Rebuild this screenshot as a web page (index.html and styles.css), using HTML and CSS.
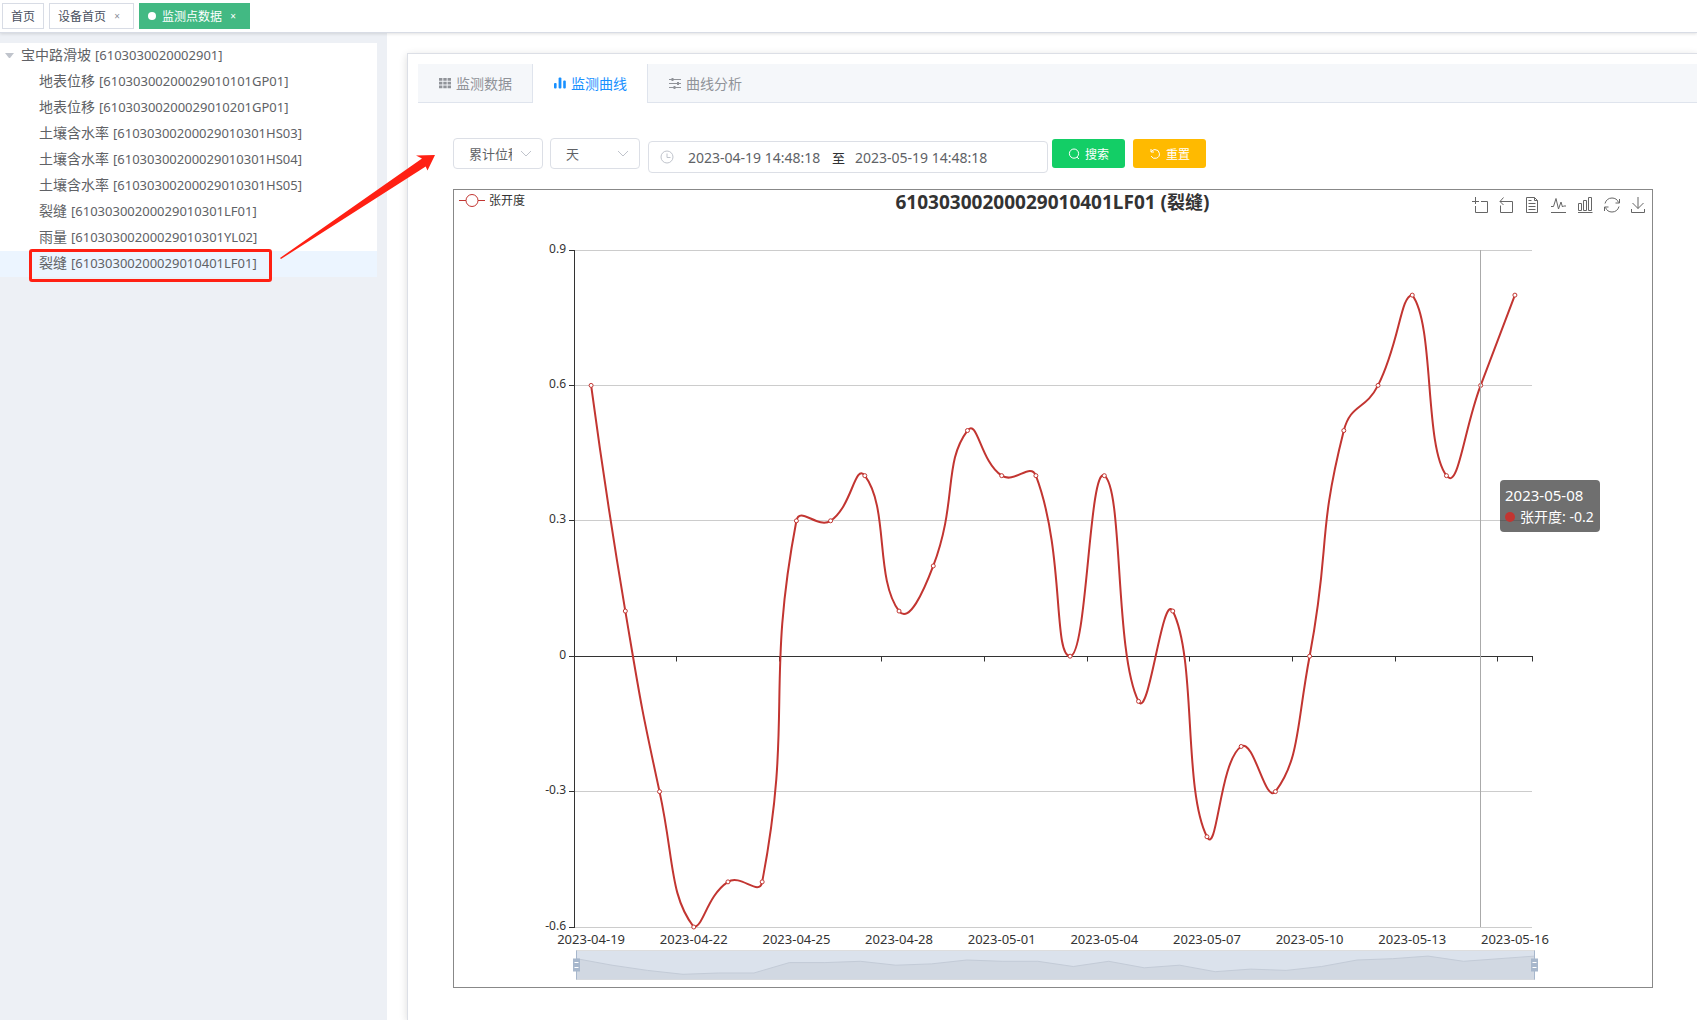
FILE: index.html
```html
<!DOCTYPE html>
<html lang="zh-CN">
<head>
<meta charset="utf-8">
<meta name="viewport" content="width=device-width, initial-scale=1">
<title>监测点数据</title>
<link rel="stylesheet" href="styles.css">
</head>
<body>
<div class="app">
  <nav class="tags" aria-label="已打开页面">
    <a class="tag" href="#home">首页</a>
    <a class="tag" href="#device">设备首页<span class="tag-close">×</span></a>
    <a class="tag tag-active" href="#point">监测点数据<span class="tag-close">×</span></a>
  </nav>

  <div class="body">
    <aside class="side">
      <ul class="tree">
        <li class="node root"><span class="caret"></span>宝中路滑坡 <span class="code">[6103030020002901]</span></li>
        <li class="node">地表位移 <span class="code">[61030300200029010101GP01]</span></li>
        <li class="node">地表位移 <span class="code">[61030300200029010201GP01]</span></li>
        <li class="node">土壤含水率 <span class="code">[61030300200029010301HS03]</span></li>
        <li class="node">土壤含水率 <span class="code">[61030300200029010301HS04]</span></li>
        <li class="node">土壤含水率 <span class="code">[61030300200029010301HS05]</span></li>
        <li class="node">裂缝 <span class="code">[61030300200029010301LF01]</span></li>
        <li class="node">雨量 <span class="code">[61030300200029010301YL02]</span></li>
        <li class="node current">裂缝 <span class="code">[61030300200029010401LF01]</span></li>
      </ul>
    </aside>

    <main class="main">
      <section class="card">
        <div class="tabs" role="tablist">
          <button class="tab" role="tab" type="button">
            <svg class="tab-icon" viewBox="0 0 14 14" fill="currentColor"><path d="M1 2h3.4v2.8H1zM5.3 2h3.4v2.8H5.3zM9.6 2H13v2.8H9.6zM1 5.7h3.4v2.8H1zM5.3 5.7h3.4v2.8H5.3zM9.6 5.7H13v2.8H9.6zM1 9.4h3.4v2.8H1zM5.3 9.4h3.4v2.8H5.3zM9.6 9.4H13v2.8H9.6z"/></svg>监测数据</button>
          <button class="tab tab-on" role="tab" type="button" aria-selected="true">
            <svg class="tab-icon" viewBox="0 0 14 14" fill="currentColor"><rect x="1" y="7" width="2.6" height="5.5" rx="1"/><rect x="5.6" y="1.5" width="2.8" height="11" rx="1"/><rect x="10.2" y="4.5" width="2.6" height="8" rx="1"/></svg>监测曲线</button>
          <button class="tab" role="tab" type="button">
            <svg class="tab-icon" viewBox="0 0 14 14" fill="none" stroke="currentColor"><path d="M1 3.5h12M1 7.5h12M1 11.5h12"/><path d="M4.5 2v3M10 6v3M6.5 10v3" stroke-width="2"/></svg>曲线分析</button>
        </div>

        <div class="pane">
          <form class="filters">
            <div class="select">
              <select aria-label="数据类型"><option>累计位移</option></select>
              <svg class="chevron" viewBox="0 0 12 7"><path d="M1 1l5 5 5-5"/></svg>
            </div>
            <div class="select">
              <select aria-label="时间粒度"><option>天</option></select>
              <svg class="chevron" viewBox="0 0 12 7"><path d="M1 1l5 5 5-5"/></svg>
            </div>
            <div class="range">
              <svg class="clock" viewBox="0 0 14 14"><circle cx="7" cy="7" r="6"/><path d="M7 3.5V7.5h3.5"/></svg>
              <input type="text" aria-label="开始时间" value="2023-04-19 14:48:18">
              <span class="range-sep">至</span>
              <input type="text" aria-label="结束时间" value="2023-05-19 14:48:18">
            </div>
            <div class="actions">
              <button class="btn btn-search" type="button"><svg class="btn-icon" viewBox="0 0 12 12"><circle cx="6" cy="5.6" r="4.6"/><path d="M9 9.2l2 1.8"/></svg>搜索</button>
              <button class="btn btn-reset" type="button"><svg class="btn-icon" viewBox="0 0 12 12"><path d="M2 1v3h3M2.2 3.8C3.200 2.400 4.500 1.600 6 1.600a4.400 4.400 0 1 1-3.900 6.400"/></svg>重置</button>
            </div>
          </form>

          <div class="chart">
            <svg class="plot" id="plot" role="img" aria-label="张开度曲线"></svg>
            <header class="chart-head">
              <div class="legend"><svg class="legend-mark" viewBox="0 0 26 14"><path d="M0 7.500H7M19 7.500H26"/><circle cx="13" cy="7.500" r="6"/></svg>张开度</div>
              <h1 class="chart-title">61030300200029010401LF01 (<span class="cjk">裂缝</span>)</h1>
              <div class="toolbox">
                <button type="button" aria-label="区域缩放"><svg viewBox="0 0 16 16"><path d="M0 4.500H7M3.500 0V7M9 4.500h6.500v11h-12V9"/></svg></button>
                <button type="button" aria-label="缩放还原"><svg viewBox="0 0 16 16"><path d="M5.500 0.500L2 4.500l3.500 3.500M2 4.500h12.500v11h-12V8.500"/></svg></button>
                <button type="button" aria-label="数据视图"><svg viewBox="0 0 16 16"><path d="M9.500 0.500H1.500v15h11V3.500zM9.500 0.500v3h3M3.500 6.500h7M3.500 9.500h7M3.500 12.500h7M3.500 3.500h3"/></svg></button>
                <button type="button" aria-label="折线图"><svg viewBox="0 0 16 16"><path d="M0 9.500H2.500L5 1.500 7.500 12l2.500-7 1.500 5 1-1h2.500M0 15.500h15"/></svg></button>
                <button type="button" aria-label="柱状图"><svg viewBox="0 0 16 16"><path d="M1.500 6.500h3v7h-3zM6.500 3.500h3v10h-3zM11.500 0.500h3v13h-3zM1 15.500h14.500"/></svg></button>
                <button type="button" aria-label="还原"><svg viewBox="0 0 16 16"><path d="M1 6.500C2 3 4.500 1 8 1c3 0 5.500 1.500 6.500 4.500M15.500 2v4h-4M15 9.500c-1 3.500-3.500 5.500-7 5.500-3 0-5.500-1.500-6.500-4.500M0.500 14v-4h4"/></svg></button>
                <button type="button" aria-label="保存为图片"><svg viewBox="0 0 16 16"><path d="M8 0v11.500M2.500 6L8 11.500 13.500 6M1.500 12v3.500h13V12"/></svg></button>
              </div>
            </header>
            <div class="tooltip">
              <div class="tip-date">2023-05-08</div>
              <div class="tip-row"><span class="tip-dot"></span>张开度: -0.2</div>
            </div>
          </div>
        </div>
      </section>
    </main>
  </div>

  <div class="mark-box"></div>
  <svg class="mark-arrow" viewBox="0 0 160 108"><path d="M0 106L142 6.500 136 3.500 155 3 147.500 18.500 145.700 14.500 1 107z"/></svg>
</div>
<script src="chart.js"></script>
</body>
</html>
```

FILE: styles.css
```css
* { box-sizing: border-box; }

body {
  margin: 0;
  background: #fff;
  color: #606266;
  font-family: "Noto Sans", "Noto Sans CJK SC", sans-serif;
  font-size: 14px;
}

button, input, select { font: inherit; }

.app {
  position: relative;
  display: flex;
  flex-direction: column;
  min-height: 100vh;
}

/* opened pages */
.tags {
  position: relative;
  display: flex;
  gap: 5px;
  height: 33px;
  padding: 3px 2px;
  border-bottom: 1px solid #d8dce5;
  box-shadow: 0 1px 3px rgba(0, 0, 0, 0.12);
}
.tag {
  display: flex;
  align-items: center;
  height: 26px;
  padding: 0 8px;
  border: 1px solid #d8dce5;
  color: #495060;
  font-size: 12px;
  text-decoration: none;
}
.tag-close {
  width: 16px;
  margin-left: 3px;
  color: #8c919b;
  font-size: 10px;
  text-align: center;
}
.tag-active {
  border-color: #42b983;
  background: #42b983;
  color: #fff;
}
.tag-active .tag-close { color: #fff; }
.tag-active::before {
  content: "";
  width: 8px;
  height: 8px;
  margin-right: 6px;
  border-radius: 50%;
  background: #fff;
}

.body { display: flex; flex: 1; }

/* device tree */
.side {
  flex: 0 0 387px;
  padding: 10px 10px 0 0;
  background: #edf0f5;
}
.tree {
  margin: 0;
  padding: 0;
  background: #fff;
  list-style: none;
}
.node {
  display: flex;
  align-items: center;
  gap: 4px;
  height: 26px;
  padding: 0 0 2px 39px;
  line-height: 24px;
  white-space: nowrap;
}
.root { padding-left: 5px; }
.caret {
  width: 9px;
  margin-right: 3px;
  border: solid transparent;
  border-width: 5px 4px 0;
  border-top-color: #c0c4cc;
}
.code { font-size: 13px; }
.current { background: #ecf5ff; }

/* content */
.main {
  display: flex;
  flex: 1;
  min-width: 0;
  padding: 20px 0 0 20px;
}
.card {
  flex: 1;
  min-width: 0;
  padding: 10px 0 0 10px;
  border: solid #dcdfe6;
  border-width: 1px 0 0 1px;
  box-shadow: 0 2px 8px rgba(0, 0, 0, 0.14);
}
.tabs {
  display: flex;
  height: 39px;
  background: #f5f7fa;
  border-bottom: 1px solid #dfe4ed;
}
.tab {
  display: flex;
  align-items: center;
  gap: 4px;
  height: 39px;
  padding: 0 20px 2px;
  border: 0;
  background: transparent;
  color: #909399;
}
.tab-on {
  border: solid #dfe4ed;
  border-width: 0 1px;
  background: #fff;
  color: #1890ff;
}
.tab-icon { width: 14px; height: 14px; }

.pane { padding: 31px 44px 0 35px; }

.filters {
  display: flex;
  align-items: center;
  gap: 7px;
  margin-bottom: 16px;
}
.select { position: relative; }
.select select {
  display: block;
  width: 90px;
  height: 31px;
  padding: 0 30px 0 15px;
  border: 1px solid #dcdfe6;
  border-radius: 4px;
  background: #fff;
  color: #606266;
  font-size: 13px;
  appearance: none;
}
.chevron {
  position: absolute;
  top: 12px;
  right: 11px;
  width: 12px;
  height: 7px;
  fill: none;
  stroke: #c0c4cc;
  pointer-events: none;
}
.range {
  display: flex;
  align-items: center;
  width: 400px;
  height: 32px;
  margin: 7px 0 0 1px;
  padding: 0 11px;
  border: 1px solid #dcdfe6;
  border-radius: 4px;
}
.clock {
  width: 14px;
  height: 14px;
  margin-right: 14px;
  fill: none;
  stroke: #c0c4cc;
}
.range input {
  width: 134px;
  padding: 0;
  border: 0;
  outline: 0;
  background: transparent;
  color: #606266;
  font-size: 14px;
}
.range-sep {
  margin: 0 10px;
  color: #303133;
  font-size: 13px;
}
.actions {
  display: flex;
  gap: 8px;
  margin-left: -3px;
}
.btn {
  display: flex;
  align-items: center;
  justify-content: center;
  gap: 5px;
  width: 73px;
  height: 29px;
  padding: 0;
  border: 0;
  border-radius: 3px;
  color: #fff;
  font-size: 12px;
}
.btn-search { background: #13ce66; }
.btn-reset { background: #ffba00; }
.btn-icon {
  width: 12px;
  height: 12px;
  fill: none;
  stroke: #fff;
}

/* chart: the heading row and the plot share one grid cell */
.chart {
  position: relative;
  display: grid;
  border: 1px solid #888;
}
.plot, .chart-head { grid-area: 1 / 1; }
.plot {
  display: block;
  width: 100%;
  height: 797px;
}
.chart-head {
  z-index: 1;
  display: grid;
  grid-template-columns: 1fr auto 1fr;
  align-items: start;
  align-self: start;
  padding: 0 6px 0 5px;
}
.legend {
  display: flex;
  align-items: center;
  gap: 4px;
  height: 20px;
  color: #333;
  font-size: 12px;
}
.legend-mark {
  width: 26px;
  height: 14px;
  fill: none;
  stroke: #c23531;
}
.chart-title {
  margin: 0;
  color: #333;
  font-size: 19px;
  font-weight: 700;
  line-height: 24px;
}
.cjk { font-size: 18px; }
.toolbox {
  display: flex;
  justify-content: space-between;
  justify-self: end;
  width: 174px;
  padding-top: 7px;
}
.toolbox button {
  width: 16px;
  height: 16px;
  padding: 0;
  border: 0;
  background: none;
}
.toolbox svg {
  display: block;
  fill: none;
  stroke: #666;
}

.tooltip {
  position: absolute;
  top: 290px;
  right: 52px;
  z-index: 2;
  width: 100px;
  padding: 5px;
  border-radius: 4px;
  background: rgba(50, 50, 50, 0.7);
  color: #fff;
  line-height: 21px;
  white-space: nowrap;
}
.tip-date { font-size: 15px; }
.tip-row { display: flex; align-items: center; }
.tip-dot {
  width: 10px;
  height: 10px;
  margin-right: 5px;
  border-radius: 50%;
  background: #c23531;
}

/* plot parts */
.grid-line { stroke: #ccc; }
.axis { fill: none; stroke: #333; }
.pointer { stroke: #aaa; }
.series { fill: none; stroke: #c23531; stroke-width: 2; }
.dot { fill: #fff; stroke: #c23531; }
.label-x { fill: #333; font-size: 13px; text-anchor: middle; }
.label-y { fill: #333; font-size: 12px; text-anchor: end; }
.zoom-bg { fill: #dbe2ec; stroke: #ddd; }
.zoom-area { fill: #d1d8e2; }
.zoom-line { fill: none; stroke: #c3cbd7; }
.handle { fill: #a7b7cc; }
.handle-grip { stroke: #fff; }

/* callout over the page */
.mark-box {
  position: absolute;
  top: 249px;
  left: 29px;
  width: 243px;
  height: 33px;
  border: 3px solid #ff2013;
  border-radius: 3px;
}
.mark-arrow {
  position: absolute;
  top: 152px;
  left: 280px;
  width: 160px;
  height: 108px;
  fill: #ff2013;
}
```

FILE: chart.js
```js
(function () {
  var plot = document.getElementById('plot');
  var values = [0.6, 0.1, -0.3, -0.6, -0.5, -0.5, 0.3, 0.3, 0.4, 0.1, 0.2, 0.5, 0.4, 0.4,
    0, 0.4, -0.1, 0.1, -0.4, -0.2, -0.3, 0, 0.5, 0.6, 0.8, 0.4, 0.6, 0.8];
  var start = Date.UTC(2023, 3, 19);

  function add(name, cls, attrs, text) {
    var el = document.createElementNS('http://www.w3.org/2000/svg', name);
    el.setAttribute('class', cls);
    Object.keys(attrs).forEach(function (k) { el.setAttribute(k, attrs[k]); });
    if (text !== undefined) el.textContent = text;
    plot.appendChild(el);
  }
  function half(n) { return Math.floor(n) + 0.5; }

  // Smooth curve through the points, handles kept inside their bounding box
  function smooth(pts) {
    var xs = pts.map(function (p) { return p[0]; });
    var ys = pts.map(function (p) { return p[1]; });
    var lo = [Math.min.apply(0, xs), Math.min.apply(0, ys)];
    var hi = [Math.max.apply(0, xs), Math.max.apply(0, ys)];
    function clamp(p) {
      return p.map(function (v, i) { return Math.min(hi[i], Math.max(lo[i], v)); });
    }
    var d = 'M' + pts[0];
    var out = pts[0];
    for (var i = 1; i < pts.length; i++) {
      var p = pts[i], a = pts[i - 1], b = pts[i + 1] || p;
      var la = Math.hypot(p[0] - a[0], p[1] - a[1]);
      var lb = Math.hypot(p[0] - b[0], p[1] - b[1]);
      var r = lb / (la + lb);
      var v = [b[0] - a[0], b[1] - a[1]];
      var cin = clamp([p[0] - v[0] * 0.5 * (1 - r), p[1] - v[1] * 0.5 * (1 - r)]);
      if (!pts[i + 1]) cin = p;
      d += 'C' + out + ' ' + cin + ' ' + p;
      out = clamp([p[0] + v[0] * 0.5 * r, p[1] + v[1] * 0.5 * r]);
    }
    return d;
  }

  function draw() {
    plot.textContent = '';
    var w = plot.clientWidth, h = plot.clientHeight;
    var x0 = Math.round(w * 0.1), x1 = Math.round(w * 0.9), top = 60, bottom = h - 60;
    var band = (x1 - x0) / values.length;
    function y(v) { return top + (0.9 - v) / 1.5 * (bottom - top); }

    [0.9, 0.6, 0.3, 0, -0.3, -0.6].forEach(function (v) {
      var gy = half(y(v));
      if (v !== 0) add('path', 'grid-line', { d: 'M' + x0 + ' ' + gy + 'H' + x1 });
      add('path', 'axis', { d: 'M' + (x0 - 5) + ' ' + gy + 'H' + x0 });
      add('text', 'label-y', { x: x0 - 8, y: gy + 2 }, String(v));
    });
    add('path', 'axis', { d: 'M' + half(x0) + ' ' + top + 'V' + (bottom + 1) });
    var zero = half(y(0)), d = 'M' + x0 + ' ' + zero + 'H' + (x1 + 1);
    for (var i = 0; i <= values.length; i++) {
      if (i % 3 === 0 || i === values.length) d += 'M' + half(x0 + i * band) + ' ' + zero + 'v5';
    }
    add('path', 'axis', { d: d });

    var pts = values.map(function (v, i) { return [x0 + (i + 0.5) * band, y(v)]; });
    add('path', 'series', { d: smooth(pts) });
    pts.forEach(function (p, i) {
      add('circle', 'dot', { cx: p[0], cy: p[1], r: 2 });
      if (i % 3 === 0) {
        var day = new Date(start + i * 864e5).toISOString().slice(0, 10);
        add('text', 'label-x', { x: p[0], y: bottom + 17 }, day);
      }
    });
    add('path', 'pointer', { d: 'M' + half(pts[26][0]) + ' ' + top + 'V' + bottom });

    // Range slider with a small copy of the series
    var zx0 = half(x0 + 2), zx1 = half(x1 + 2), zt = bottom + 23.5, zb = zt + 29;
    add('rect', 'zoom-bg', { x: zx0, y: zt, width: zx1 - zx0, height: zb - zt });
    var line = values.map(function (v, i) {
      return [zx0 + i * (zx1 - zx0) / (values.length - 1), zt + 16 - v * 13];
    }).join('L');
    add('path', 'zoom-area', { d: 'M' + zx0 + ' ' + zb + 'L' + line + 'V' + zb + 'z' });
    add('path', 'zoom-line', { d: 'M' + line });
    [zx0, zx1].forEach(function (x) {
      add('rect', 'handle', { x: x - 0.5, y: zt, width: 1, height: zb - zt });
      add('rect', 'handle', { x: x - 3.5, y: zt + 8, width: 7, height: 13 });
      add('path', 'handle-grip', { d: 'M' + (x - 2) + ' ' + (zt + 12) + 'h4m-4 5h4' });
    });
  }

  draw();
  window.addEventListener('resize', draw);
})();
```
